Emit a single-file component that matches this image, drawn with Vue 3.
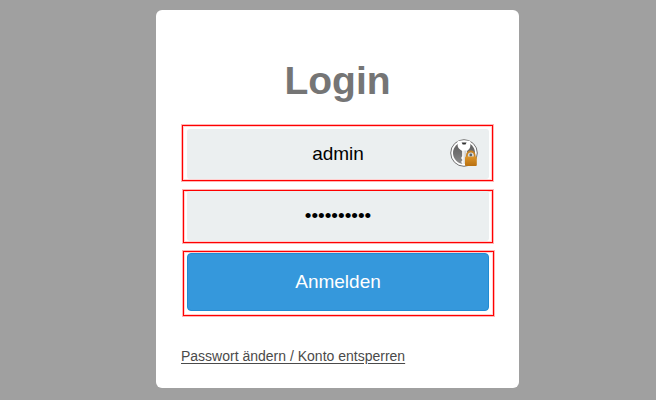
<script setup>
import { ref } from 'vue'

const user = ref('admin')
const password = ref('geheim1234')
</script>

<template>
  <main class="page">
    <form class="card" @submit.prevent>
      <h1 class="title">Login</h1>

      <div class="frame frame-user">
        <input v-model="user" class="field" type="text" aria-label="Benutzername" autocomplete="off" />
        <svg class="key" viewBox="0 0 28 28" aria-hidden="true">
          <defs>
            <linearGradient id="disc" x1="0" y1="0" x2="0" y2="1">
              <stop offset="0" stop-color="#5c5c5c" />
              <stop offset="0.5" stop-color="#707070" />
              <stop offset="1" stop-color="#8c8c8c" />
            </linearGradient>
            <linearGradient id="shaft" x1="0" y1="0" x2="1" y2="0">
              <stop offset="0" stop-color="#ffffff" />
              <stop offset="1" stop-color="#c4c4c4" />
            </linearGradient>
            <linearGradient id="lock" x1="0" y1="0" x2="0" y2="1">
              <stop offset="0" stop-color="#dc952b" />
              <stop offset="1" stop-color="#b87010" />
            </linearGradient>
          </defs>
          <circle cx="14" cy="14" r="13.3" fill="#fff" stroke="#707070" stroke-width="1" />
          <circle cx="14" cy="14" r="11" fill="url(#disc)" />
          <path d="M7.6 1.8h12.8v4.4c0 2.4-1.2 4.3-3.4 5.8v14h-3.6l-2-2.4v-1.4l1.2-1.2-1.2-1.2v-1.6l.8-1V12c-2.6-1.5-4.6-3.4-4.6-5.8z" fill="#fff" />
          <path d="M12.8 11.5h3.6V25h-2.8l-1.4-1.6 1.1-2.2-1.1-1.9.6-1.8z" fill="url(#shaft)" />
          <path d="M11.6 3.4h5l-1.1 2.2h-2.8z" fill="#333" />
          <path d="M16.9 18.5v-2.1a3.9 3.9 0 0 1 7.8 0v2.1" fill="#d9dde0" stroke="#c88424" stroke-width="1.8" />
          <circle cx="20.8" cy="16" r="1.4" fill="#59656d" />
          <rect x="15" y="17.6" width="11.8" height="9.4" rx="1" fill="url(#lock)" />
        </svg>
      </div>

      <div class="frame frame-password">
        <input v-model="password" class="field" type="password" aria-label="Passwort" autocomplete="off" />
      </div>

      <div class="frame frame-submit">
        <button class="submit" type="submit">Anmelden</button>
      </div>

      <a class="link" href="#">Passwort ändern / Konto entsperren</a>
    </form>
  </main>
</template>

<style>
body {
  margin: 0;
  background: #a0a0a0;
}
</style>

<style scoped>
.page {
  display: flex;
  justify-content: center;
  padding: 10px 0 12px 19px;
  font-family: "Liberation Sans", Arial, sans-serif;
}

.card {
  box-sizing: border-box;
  display: flex;
  flex-direction: column;
  width: 100%;
  max-width: 363px;
  padding: 49px 25px 22px;
  border-radius: 6px;
  background: #fff;
}

.title {
  margin: 0 0 22px;
  color: #757575;
  font-size: 39px;
  font-weight: bold;
  line-height: 44px;
  text-align: center;
}

.frame {
  position: relative;
  display: flex;
  border: 1px solid #f00;
  box-shadow: 0 0 0 1px #ffb5b5, inset 0 0 0 1px #ffd0d0;
}

.frame-user {
  margin: 0 1px 9px;
  padding: 3px 3px 1px 4px;
}

.frame-password {
  margin: 0 1px 8px 2px;
  padding: 0 3px 1px;
}

.frame-submit {
  margin: 0 0 0 2px;
  padding: 1px 4px 4px 3px;
}

.field {
  box-sizing: border-box;
  width: 100%;
  min-width: 0;
  height: 50px;
  padding: 0;
  border: 0;
  border-radius: 3px;
  outline: 0;
  background: #ebeff0;
  color: #000;
  font-family: inherit;
  font-size: 19px;
  text-align: center;
}

.key {
  position: absolute;
  top: 13px;
  right: 14px;
  width: 28px;
  height: 28px;
}

.submit {
  width: 100%;
  height: 58px;
  padding: 0;
  border: 1px solid #1f8bd3;
  border-radius: 4px;
  background: #3598dc;
  color: #fff;
  font-family: inherit;
  font-size: 19px;
  cursor: pointer;
}

.link {
  align-self: flex-start;
  margin-top: 30px;
  color: #4a4a4a;
  font-size: 14px;
  line-height: 20px;
  text-underline-offset: 2px;
}
</style>
